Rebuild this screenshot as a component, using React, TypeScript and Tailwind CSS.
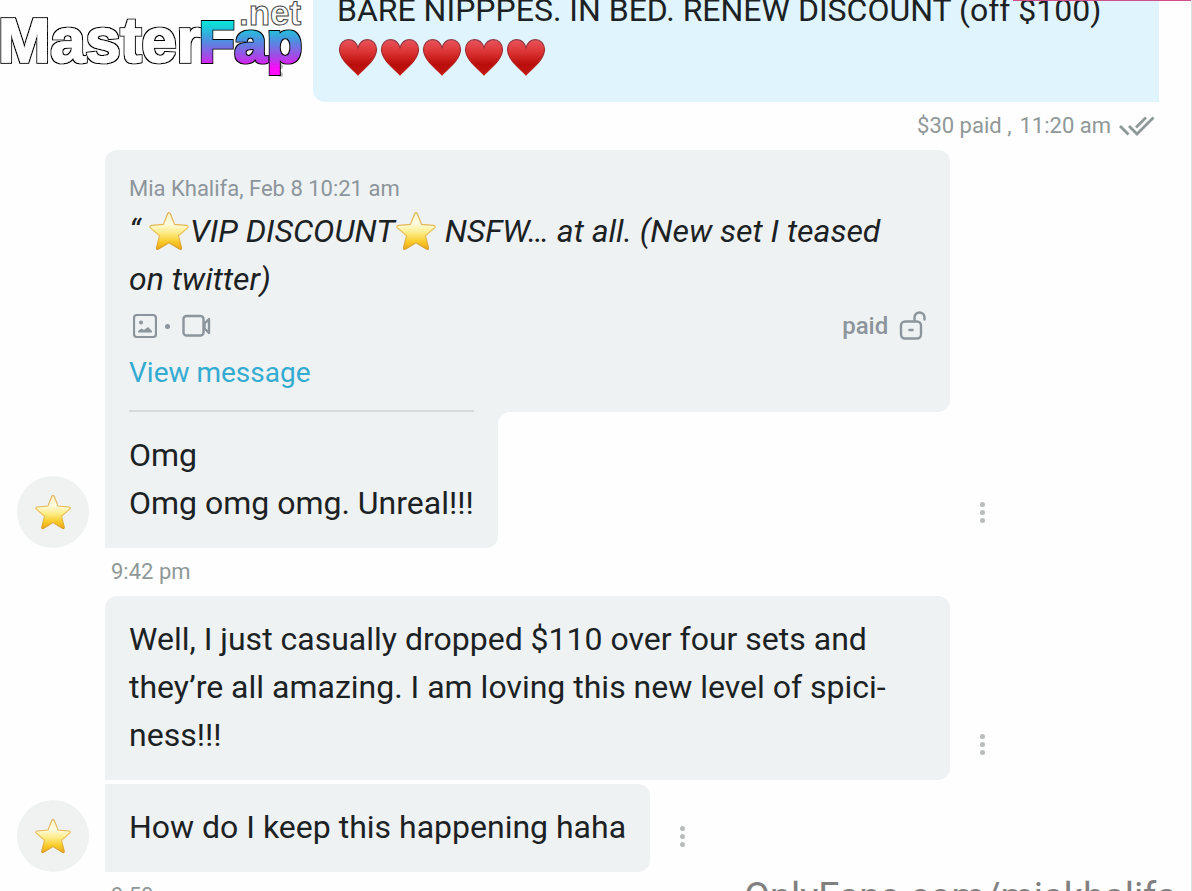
import React from "react";

const Star: React.FC<{ className: string }> = ({ className }) => (
  <svg viewBox="0 0 40 40" className={className} aria-hidden="true">
    <defs>
      <linearGradient id="star-fill" x1="0" y1="0" x2="0" y2="1">
        <stop offset="0" stopColor="#fff3c4" />
        <stop offset="0.3" stopColor="#fffbe0" />
        <stop offset="0.55" stopColor="#fdec86" />
        <stop offset="0.8" stopColor="#f9c926" />
        <stop offset="1" stopColor="#eba71d" />
      </linearGradient>
      <linearGradient id="star-edge" x1="0" y1="0" x2="0" y2="1">
        <stop offset="0" stopColor="#dfae55" />
        <stop offset="0.6" stopColor="#eec05a" />
        <stop offset="1" stopColor="#d99a20" />
      </linearGradient>
    </defs>
    <path
      d="M20 1.6c.7 0 1.100.5 1.400 1.200l4.200 10.600 12 1c1.700.2 2 1.500.9 2.500l-9 7.800 2.900 11.900c.4 1.500-.6 2.300-1.900 1.500L20 31.800 9.500 38.100c-1.300.8-2.300 0-1.900-1.500l2.900-11.900-9-7.800c-1.100-1-.8-2.300.9-2.500l12-1 4.200-10.600c.3-.7.7-1.200 1.400-1.200z"
      fill="url(#star-fill)"
      stroke="url(#star-edge)"
      strokeWidth="1.200"
    />
  </svg>
);

const Heart: React.FC = () => (
  <svg viewBox="0 0 42 40" className="h-10 w-[42px]" aria-hidden="true">
    <defs>
      <linearGradient id="heart-fill" x1="0" y1="0" x2="0" y2="1">
        <stop offset="0" stopColor="#e8545c" />
        <stop offset="0.35" stopColor="#dc3434" />
        <stop offset="0.7" stopColor="#b90e0a" />
        <stop offset="1" stopColor="#c0140f" />
      </linearGradient>
      <linearGradient id="heart-edge" x1="0" y1="0" x2="0" y2="1">
        <stop offset="0" stopColor="#8e3b45" />
        <stop offset="0.6" stopColor="#b3201f" />
        <stop offset="1" stopColor="#c41a12" />
      </linearGradient>
    </defs>
    <path
      d="M21 37C17 32 2.500 22.500 2.500 11.300 2.500 5.500 6.600 1.700 11.500 1.700c4.400 0 7.900 3.200 9.500 8 1.600-4.800 5.100-8 9.500-8 4.900 0 9 3.800 9 9.600C39.500 22.500 25 32 21 37z"
      fill="url(#heart-fill)"
      stroke="url(#heart-edge)"
      strokeWidth="1.200"
    />
  </svg>
);

const Logo: React.FC = () => (
  <svg
    viewBox="0 0 312 84"
    className="pointer-events-none absolute top-0 left-0 h-[84px] w-[312px] font-['Liberation_Sans'] font-bold"
    role="img"
    aria-label="MasterFap.net"
  >
    <defs>
      <linearGradient id="logo-fill" gradientUnits="userSpaceOnUse" x1="0" y1="17" x2="0" y2="76">
        <stop offset="0.1" stopColor="#08e0d8" />
        <stop offset="0.4" stopColor="#4c90e0" />
        <stop offset="0.7" stopColor="#b040e8" />
        <stop offset="0.88" stopColor="#ff08f8" />
      </linearGradient>
      {/* thin dark line round the lettering */}
      <filter id="logo-outline" x="-10%" y="-10%" width="120%" height="120%">
        <feMorphology in="SourceAlpha" operator="dilate" radius="0.7" result="grown" />
        <feMerge>
          <feMergeNode in="grown" />
          <feMergeNode in="SourceGraphic" />
        </feMerge>
      </filter>
    </defs>
    <text x="-2" y="62" fontSize="63" fill="#fff" stroke="#fff" strokeWidth="1.500" filter="url(#logo-outline)">
      Master
    </text>
    <text x="239" y="25" fontSize="35" fill="#fff" stroke="#444" strokeWidth="1">
      .net
    </text>
    <text
      x="199"
      y="62"
      fontSize="58"
      fill="url(#logo-fill)"
      stroke="url(#logo-fill)"
      strokeWidth="2"
      filter="url(#logo-outline)"
    >
      Fap
    </text>
  </svg>
);

const MenuButton: React.FC = () => (
  <button
    type="button"
    aria-label="Message options"
    className="flex h-[72px] w-16 shrink-0 flex-col items-center justify-center gap-[3px]"
  >
    <span className="size-[5px] rounded-full bg-[#b9bcbc]" />
    <span className="size-[5px] rounded-full bg-[#b9bcbc]" />
    <span className="size-[5px] rounded-full bg-[#b9bcbc]" />
  </button>
);

const Avatar: React.FC = () => (
  <div className="mr-4 flex size-[72px] shrink-0 items-center justify-center rounded-full bg-[#f0f2f2]">
    <Star className="size-9" />
  </div>
);

const ImageIcon: React.FC = () => (
  <svg viewBox="0 0 24 24" className="size-6" fill="none" aria-hidden="true">
    <rect x="1" y="1" width="22" height="22" rx="3" stroke="#8c959b" strokeWidth="2.200" />
    <circle cx="8" cy="8.500" r="2" fill="#8c959b" />
    <path d="M5 18.500v-1.500l3.500-2.500 2.500 1.500 4-3 4 4v1.500z" fill="#8c959b" />
  </svg>
);

const VideoIcon: React.FC = () => (
  <svg viewBox="0 0 30 24" className="h-6 w-[30px]" fill="none" stroke="#8c959b" strokeWidth="2.400" aria-hidden="true">
    <rect x="1.500" y="2" width="20" height="19.500" rx="3" />
    <path d="M22.500 9.500L27 5v14l-4.500-4.500z" strokeLinejoin="round" />
  </svg>
);

const UnlockIcon: React.FC = () => (
  <svg viewBox="0 0 28 30" className="h-[30px] w-7" fill="none" stroke="#8c959b" strokeWidth="2.400" aria-hidden="true">
    <rect x="3" y="10.500" width="20" height="17" rx="4" />
    <path d="M16.500 10V6.500a5 5 0 0 1 10 0v2" strokeLinecap="round" />
    <path d="M11.500 19h3" strokeWidth="2.600" strokeLinecap="round" />
  </svg>
);

const ReadIcon: React.FC = () => (
  <svg viewBox="0 0 36 22" className="h-[22px] w-9" fill="none" stroke="#8f9898" strokeWidth="2.800" aria-hidden="true">
    <path d="M1 11l8.500 8.500" />
    <path d="M10 11l8 8L34.500 2.500" />
    <path d="M17 12.500l10-10" />
  </svg>
);

export default function App() {
  return (
    <main className="relative h-screen overflow-hidden border-r border-[#dde3e3] bg-[#fefefe] font-[Roboto,sans-serif] text-[32px] leading-[48px] text-[#1c2224]">
      <div className="absolute top-0 right-0 h-px w-[178px] bg-[#d0508c]" />

      {/* outgoing message, scrolled half out of view */}
      <section className="pr-8">
        <div className="flex items-end justify-end">
          <MenuButton />
          <div className="w-[73%] rounded-bl-xl bg-[#dff4fc] px-6 pb-[21px]">
            <p className="-mt-3.5">BARE NIPPPES. IN BED. RENEW DISCOUNT (off $100)</p>
            <div className="flex h-[47px] items-center" role="img" aria-label="five hearts">
              <Heart />
              <Heart />
              <Heart />
              <Heart />
              <Heart />
            </div>
          </div>
        </div>
        <div className="flex h-12 items-center justify-end gap-2 pr-1 text-[22px] text-[#8f9898]">
          <div className="flex gap-2">
            <span>$30 paid ,</span>
            <span>11:20 am</span>
          </div>
          <ReadIcon />
        </div>
      </section>

      <section className="pl-[17px]">
        <div className="flex items-end">
          <Avatar />
          <div className="w-[72%]">
            <div className="rounded-t-xl rounded-br-xl bg-[#eef2f3] px-6 pt-[21px]">
              <p className="text-[22px] leading-9 text-[#8c959b]">Mia Khalifa, Feb 8 10:21 am</p>
              <p className="pr-2 italic">
                “ <Star className="inline h-10 w-[42px] align-[-9px]" />
                VIP DISCOUNT
                <Star className="inline h-10 w-[42px] align-[-9px]" /> NSFW… at all. (New set I teased on twitter)
              </p>
              <div className="flex h-[46px] items-center pl-1 text-2xl text-[#8c959b]">
                <ImageIcon />
                <span className="mr-3 ml-2 size-[5px] rounded-full bg-[#8c959b]" />
                <VideoIcon />
                <span className="mr-2.5 ml-auto font-medium">paid</span>
                <UnlockIcon />
              </div>
              <a href="#message" className="block h-[63px] text-[28px] text-[#34abd0]">
                View message
              </a>
            </div>
            <div className="relative -mt-0.5 w-fit rounded-br-xl bg-[#eef2f3] px-6 pb-[21px]">
              <p className="border-t-2 border-[#d5dbdd] pt-[19px]">Omg</p>
              <p>Omg omg omg. Unreal!!!</p>
              {/* inner corner where the two bubbles meet */}
              <span className="absolute top-0.5 left-full size-3 bg-[#eef2f3]">
                <span className="block size-full rounded-tl-xl bg-[#fefefe]" />
              </span>
            </div>
          </div>
          <MenuButton />
        </div>
        <time className="ml-[94px] block text-[22px] text-[#8f9898]">9:42 pm</time>
      </section>

      <section className="pl-[17px]">
        <div className="mb-1 flex items-end">
          <div className="w-[88px] shrink-0" />
          <p className="w-[72%] rounded-t-xl rounded-br-xl bg-[#eef2f3] px-6 pt-[19px] pb-[21px]">
            Well, I just casually dropped $110 over four sets and they’re all amazing. I am loving this new level of
            spici-ness!!!
          </p>
          <MenuButton />
        </div>
        <div className="flex items-end">
          <Avatar />
          <p className="rounded-r-xl bg-[#eef2f3] px-6 pt-[19px] pb-[21px]">How do I keep this happening haha</p>
          <MenuButton />
        </div>
        <time className="ml-[94px] block text-[22px] text-[#8f9898]">9:50 pm</time>
      </section>

      <Logo />
      <p className="absolute right-3.5 -bottom-[30px] text-[38px] text-[#808080]">OnlyFans.com/miakhalifa</p>
    </main>
  );
}
